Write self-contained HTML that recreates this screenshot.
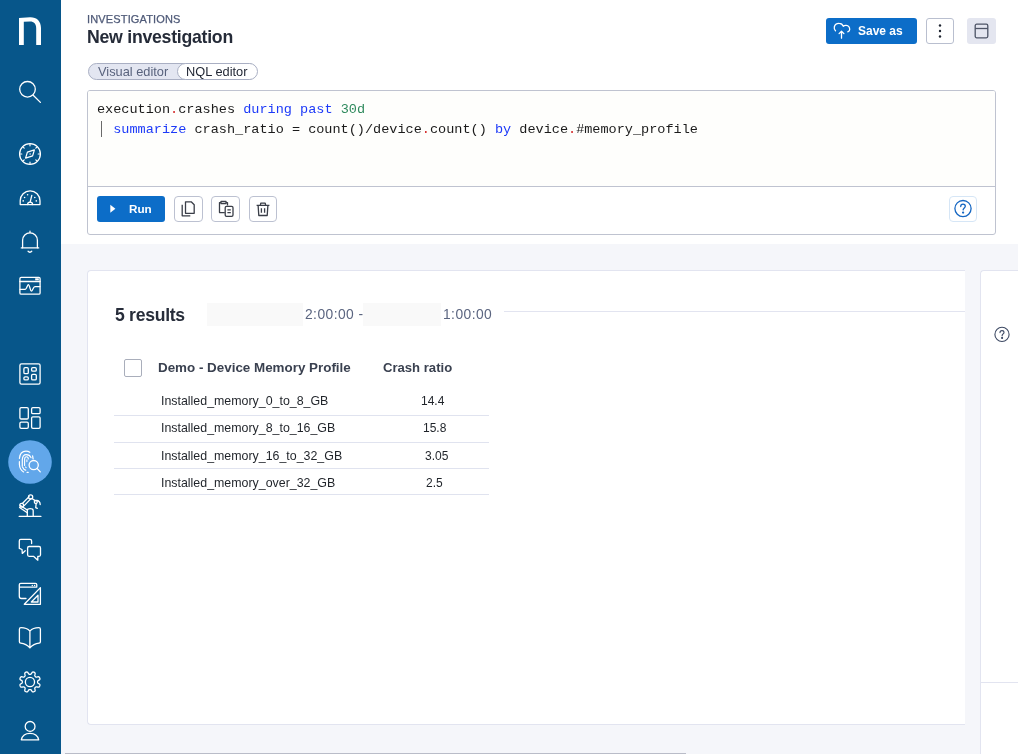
<!DOCTYPE html>
<html><head><meta charset="utf-8">
<style>
*{box-sizing:border-box;margin:0;padding:0}
html,body{width:1018px;height:754px;overflow:hidden;background:#fff;font-family:"Liberation Sans",sans-serif}
.abs{position:absolute;will-change:transform}
#side{position:absolute;left:0;top:0;width:61px;height:754px;background:#07568a}
#side svg{position:absolute;overflow:visible}
#hdr-sub{left:87px;top:13.7px;font-size:11px;line-height:11px;letter-spacing:0.15px;color:#4f5a78;-webkit-text-stroke:0.25px #4f5a78}
#hdr-title{left:87px;top:29px;font-size:17.7px;line-height:17.7px;letter-spacing:-0.26px;font-weight:bold;color:#252b38}
.btn{position:absolute;border-radius:3px}
#saveas{left:826px;top:18px;width:91px;height:26px;background:#0c6dc8;color:#fff;font-weight:bold;font-size:13px}
#kebab{left:926px;top:18px;width:28px;height:26px;border:1px solid #b9bfcf;background:#fff}
#layout{left:967px;top:18px;width:29px;height:26px;background:#e4e6f0}
#pill{left:88px;top:63px;width:169px;height:17px;border:1px solid #a9afc3;border-radius:9px;background:#e3e6f1}
#pill .on{position:absolute;left:88px;top:-1px;width:81px;height:17px;border:1px solid #a9afc3;border-radius:9px;background:#fff}
#editor{left:87px;top:90px;width:909px;height:145px;border:1px solid #bfc3d0;border-radius:3px;background:#fff}#codebg{left:88px;top:91px;width:907px;height:95px;background:#fefefc;border-radius:2px 2px 0 0}
#code{left:97px;top:99.6px;font-family:"Liberation Mono",monospace;font-size:13.54px;line-height:20px;color:#1b1b1b;white-space:pre}
.kw{color:#1d3af8}.num{color:#2f8a5d}.dot{color:#d42a2a}.bar{display:inline-block;width:8.12px;height:16px;vertical-align:-4px;position:relative}.bar:after{content:"";position:absolute;left:3.5px;top:0;width:1.5px;height:16px;background:#6a6a6a}
#divider{left:88px;top:186px;width:907px;height:1px;background:#bfc3d0}
#run{left:97px;top:196px;width:68px;height:26px;background:#0c6dc8}
.tb{position:absolute;top:196px;width:29px;height:26px;border:1px solid #bcc1d1;border-radius:4px;background:#fff}
#gray{left:61px;top:244px;width:957px;height:510px;background:#f5f6fa}
#card{left:87px;top:270px;width:878px;height:455px;background:#fff;border:1px solid #e2e4f0;border-right:none;border-radius:4px 0 0 4px}
#rpanel{left:980px;top:270px;width:38px;height:484px;background:#fff;border:1px solid #e2e4f0;border-right:none;border-bottom:none;border-radius:4px 0 0 0}
</style></head>
<body>
<div id="side">
<svg width="61" height="754" viewBox="0 0 61 754" style="left:0;top:0" fill="none" stroke="#fff" stroke-width="1.3" stroke-linecap="round" stroke-linejoin="round">
<path d="M19,18 L30,17.2 C36.5,17 41,21 41,28 L41,45 L36.2,45 L36.2,28.5 C36.2,24 34,21.6 30,21.6 L23.8,21.8 L23.8,45 L19,45 Z" fill="#fff" stroke="none"/>
<circle cx="27.5" cy="89.3" r="7.8"/>
<path d="M33.2,95.2 L40.4,102.4"/>
<circle cx="30" cy="154" r="10.4"/>
<path d="M30,144.2v1.6 M30,162.2v1.6 M20.2,154h1.6 M38.2,154h1.6 M23.1,147.1l1.1,1.1 M35.8,159.8l1.1,1.1 M36.9,147.1l-1.1,1.1 M24.2,159.8l-1.1,1.1" stroke-width="1.2"/>
<path d="M25.6,158.1 L27.4,152.1 L34.4,149.9 L32.6,155.9 Z" stroke-width="1.25"/>
<circle cx="30.1" cy="154" r="0.7" fill="#fff" stroke="none"/>
<path d="M20.2,204.6 L20.2,200.8 A9.9,9.9 0 0 1 40,200.8 L40,204.6 Z"/>
<path d="M27.6,204.6 A2.5,2.5 0 0 1 32.6,204.6"/>
<path d="M30.2,201.8 L31.8,195.4"/>
<g fill="#fff" stroke="none"><circle cx="27.6" cy="194.7" r="0.8"/><circle cx="24.6" cy="197.5" r="0.8"/><circle cx="23.2" cy="200.9" r="0.8"/><circle cx="34.8" cy="197.5" r="0.8"/><circle cx="36.3" cy="200.9" r="0.8"/></g>
<path d="M22.6,247.8 L22.6,240.2 A7.4,7.4 0 0 1 37.4,240.2 L37.4,247.8"/>
<path d="M21.3,247.9 L38.7,247.9 M30,231.2 L30,232.6"/>
<path d="M28,251.2 C29,252.6 30.8,252.6 31.8,251.2"/>
<rect x="19.9" y="277.4" width="20.2" height="16.8" rx="1.3"/>
<path d="M19.9,281.5 L40.1,281.5"/>
<rect x="35.2" y="278.3" width="3.6" height="2" fill="#fff" stroke="none"/>
<path d="M20,289.3 L25.3,289.3 C26.8,289.2 27.4,284.6 28.4,284.6 C29.6,284.6 30.3,291.2 31.4,291.2 C32.5,291.2 33.3,286.6 34.9,286.6 L39.9,286.6"/>
<rect x="19.9" y="363.9" width="20.2" height="20.2" rx="1.6"/>
<rect x="23.9" y="367.7" width="4.4" height="5.9" rx="1.2"/>
<rect x="31.6" y="367.7" width="4.7" height="3.4" rx="1.2"/>
<rect x="23.9" y="376.9" width="4.4" height="3" rx="1.2"/>
<rect x="31.6" y="374.3" width="4.7" height="5.6" rx="1.2"/>
<rect x="19.9" y="407.7" width="8.4" height="11.3" rx="1.3"/>
<rect x="19.9" y="422.1" width="8.4" height="6.3" rx="1.3"/>
<rect x="31.6" y="407.7" width="8.5" height="6" rx="1.3"/>
<rect x="31.6" y="416.8" width="8.5" height="11.6" rx="1.3"/>
<circle cx="30" cy="462" r="21.8" fill="#62a7ea" stroke="none"/>
<path d="M19.4,458.4 C19.8,453.8 22.5,451.2 26,451.2 C27.5,451.2 28.8,451.6 29.8,452.3" stroke-width="1.2"/>
<path d="M19.4,461.5 L19.4,464.5 C19.6,468 21.2,470.5 23.6,471.9 M27.1,472.4 L28.2,472.4" stroke-width="1.2"/>
<path d="M22.3,466.2 L22.3,459.6 C22.5,456.3 24,454.6 26.2,454.6 C28.5,454.6 30.3,455.8 31,457.6 M32.6,455.8 L33.1,458.8" stroke-width="1.2"/>
<path d="M22.5,467 C23.4,469 24.4,470 25.7,470.2" stroke-width="1.2"/>
<path d="M24.6,465.4 L24.6,459.6 C24.6,457.8 25.4,456.8 26.5,456.8 C27.6,456.8 28.3,457.7 28.3,459 M26.9,459.9 L26.9,461.6 M25.6,467 L26.1,467.6" stroke-width="1.1"/>
<circle cx="33.7" cy="465.1" r="4.6"/>
<path d="M37,468.4 L40.3,471.9"/>
<path d="M19.2,516.4 L40.9,516.4"/>
<path d="M27.3,516 L27.3,510.5 C27.3,509.3 28.3,508.7 30.2,508.7 C32.1,508.7 33.2,509.3 33.2,510.5 L33.2,516"/>
<path d="M27.3,510 L20.5,505.6 M27.3,512.8 L19.6,507.5"/>
<circle cx="21.7" cy="505.2" r="1.9"/>
<path d="M22.6,503.2 L29.1,496.6 M24.2,505.6 L31,498.6"/>
<circle cx="30.6" cy="496.9" r="2.1"/>
<path d="M32.3,498.8 L35.2,500.6"/>
<circle cx="35.8" cy="502" r="1.5"/>
<path d="M36.5,500.5 C38.5,500.3 40.2,502 40.2,504.5 M36.2,503.5 L35.7,507.6 L37.3,508.4"/>
<path d="M31.6,543.6 L31.6,540.9 C31.6,539.9 31,539.3 30,539.3 L20.7,539.3 C19.7,539.3 19.3,539.9 19.3,540.9 L19.3,548.4 L22,549.5 L22.3,553.4 L25.2,550.8"/>
<path d="M29.1,546.5 L39.1,546.5 C40,546.5 40.5,547 40.5,548 L40.5,554.8 C40.5,555.8 40,556.3 39.1,556.3 L37.8,556.3 L37.8,560.2 L33.5,556.3 L29.1,556.3 C28.2,556.3 27.6,555.8 27.6,554.8 L27.6,548 C27.6,547 28.2,546.5 29.1,546.5 Z"/>
<path d="M36.8,586.6 L36.8,584.8 C36.8,583.9 36.3,583.3 35.4,583.3 L20.8,583.3 C19.9,583.3 19.3,583.9 19.3,584.8 L19.3,596.3 C19.3,597.6 20.2,598.5 21.5,598.5 L26,598.5 M19.3,587.1 L36.8,587.1"/>
<g fill="#fff" stroke="none"><circle cx="32.3" cy="585.5" r="0.7"/><circle cx="34.6" cy="585.5" r="0.7"/></g>
<path d="M40.4,587.6 L40.4,604.3 L24.3,604.3 Z"/>
<path d="M38,595.2 L38,602 L31.3,602 Z"/>
<path d="M29.9,631.2 L29.9,647.9 M29.9,631.2 C28,629 25,627.7 21,627.7 C20,627.7 19.4,628.3 19.4,629.3 L19.4,641.8 C19.4,642.6 19.9,643.1 20.7,643.2 C24.5,643.7 27.7,645.5 29.9,647.9 C32.1,645.5 35.3,643.7 39.1,643.2 C39.9,643.1 40.4,642.6 40.4,641.8 L40.4,629.3 C40.4,628.3 39.8,627.7 38.8,627.7 C34.8,627.7 31.8,629 29.9,631.2"/>
<path d="M37.60,681.95 L37.60,682.25 L37.62,682.55 L37.72,682.87 L38.07,683.24 L38.88,683.73 L39.65,684.28 L39.94,684.77 L39.94,685.20 L39.84,685.60 L39.70,685.99 L39.52,686.36 L39.31,686.72 L39.00,687.02 L38.46,687.16 L37.52,687.01 L36.60,686.78 L36.09,686.79 L35.80,686.95 L35.57,687.15 L35.36,687.36 L35.15,687.57 L34.95,687.80 L34.79,688.09 L34.78,688.60 L35.01,689.52 L35.16,690.46 L35.02,691.00 L34.72,691.31 L34.36,691.52 L33.99,691.70 L33.60,691.84 L33.20,691.94 L32.77,691.94 L32.28,691.65 L31.73,690.88 L31.24,690.07 L30.87,689.72 L30.55,689.62 L30.25,689.60 L29.95,689.60 L29.65,689.60 L29.35,689.62 L29.03,689.72 L28.66,690.07 L28.17,690.88 L27.62,691.65 L27.13,691.94 L26.70,691.94 L26.30,691.84 L25.91,691.70 L25.54,691.52 L25.18,691.31 L24.88,691.00 L24.74,690.46 L24.89,689.52 L25.12,688.60 L25.11,688.09 L24.95,687.80 L24.75,687.57 L24.54,687.36 L24.33,687.15 L24.10,686.95 L23.81,686.79 L23.30,686.78 L22.38,687.01 L21.44,687.16 L20.90,687.02 L20.59,686.72 L20.38,686.36 L20.20,685.99 L20.06,685.60 L19.96,685.20 L19.96,684.77 L20.25,684.28 L21.02,683.73 L21.83,683.24 L22.18,682.87 L22.28,682.55 L22.30,682.25 L22.30,681.95 L22.30,681.65 L22.28,681.35 L22.18,681.03 L21.83,680.66 L21.02,680.17 L20.25,679.62 L19.96,679.13 L19.96,678.70 L20.06,678.30 L20.20,677.91 L20.38,677.54 L20.59,677.18 L20.90,676.88 L21.44,676.74 L22.38,676.89 L23.30,677.12 L23.81,677.11 L24.10,676.95 L24.33,676.75 L24.54,676.54 L24.75,676.33 L24.95,676.10 L25.11,675.81 L25.12,675.30 L24.89,674.38 L24.74,673.44 L24.88,672.90 L25.18,672.59 L25.54,672.38 L25.91,672.20 L26.30,672.06 L26.70,671.96 L27.13,671.96 L27.62,672.25 L28.17,673.02 L28.66,673.83 L29.03,674.18 L29.35,674.28 L29.65,674.30 L29.95,674.30 L30.25,674.30 L30.55,674.28 L30.87,674.18 L31.24,673.83 L31.73,673.02 L32.28,672.25 L32.77,671.96 L33.20,671.96 L33.60,672.06 L33.99,672.20 L34.36,672.38 L34.72,672.59 L35.02,672.90 L35.16,673.44 L35.01,674.38 L34.78,675.30 L34.79,675.81 L34.95,676.10 L35.15,676.33 L35.36,676.54 L35.57,676.75 L35.80,676.95 L36.09,677.11 L36.60,677.12 L37.52,676.89 L38.46,676.74 L39.00,676.88 L39.31,677.18 L39.52,677.54 L39.70,677.91 L39.84,678.30 L39.94,678.70 L39.94,679.13 L39.65,679.62 L38.88,680.17 L38.07,680.66 L37.72,681.03 L37.62,681.35 L37.60,681.65 Z"/>
<circle cx="29.95" cy="681.95" r="4.6"/>
<circle cx="30.1" cy="726.4" r="4.9"/>
<path d="M21.3,739.8 C22.2,736 25.6,733.4 30,733.4 C34.4,733.4 37.8,736 38.7,739.8 Z"/>
</svg>
</div>

<div id="hdr-sub" class="abs">INVESTIGATIONS</div>
<div id="hdr-title" class="abs">New investigation</div>

<div id="saveas" class="btn"><svg class="abs" style="left:0;top:0" width="91" height="26" fill="none" stroke="#fff" stroke-width="1.3" stroke-linecap="round" stroke-linejoin="round"><path d="M9.5,12.8 C8.3,11.5 8,10.3 8.3,9 C8.8,6.7 10.8,5.2 13.3,5.3 C15,5.3 16.5,6.2 17.3,8.3 C18,7.5 19,7.3 20.2,7.4 C22.3,7.7 23.7,9.4 23.7,11.5 C23.7,12.4 23.1,13.3 21.8,13.8"/><path d="M15.5,20.2 L15.5,13.3 M13.1,15.6 L15.5,13.2 L17.9,15.6"/></svg><span class="abs" style="left:32px;top:7px;font-size:12px;line-height:12px">Save as</span></div>
<div id="kebab" class="btn"><svg class="abs" style="left:0;top:0" width="26" height="24" fill="#1e2431"><circle cx="13" cy="6.5" r="1.2"/><circle cx="13" cy="12" r="1.2"/><circle cx="13" cy="17.5" r="1.2"/></svg></div>
<div id="layout" class="btn"><svg class="abs" style="left:0;top:0" width="29" height="26" fill="none" stroke="#4d5466" stroke-width="1.3"><rect x="8.2" y="6.2" width="12.6" height="13.6" rx="1.5"/><path d="M8.2,10.5 L20.8,10.5"/></svg></div>

<div id="pill" class="abs"><span class="abs" style="left:9px;top:2.2px;font-size:12.8px;line-height:12.8px;color:#59637d">Visual editor</span><div class="on"><span class="abs" style="left:8.2px;top:2.2px;font-size:12.8px;line-height:12.8px;color:#1e2431">NQL editor</span></div></div>

<div id="editor" class="abs"></div><div id="codebg" class="abs"></div>
<div id="divider" class="abs"></div>
<div id="code" class="abs">execution<span class="dot">.</span>crashes <span class="kw">during</span> <span class="kw">past</span> <span class="num">30d</span>
<span class="bar"></span> <span class="kw">summarize</span> crash_ratio = count()/device<span class="dot">.</span>count() <span class="kw">by</span> device<span class="dot">.</span>#memory_profile</div>
<div id="run" class="btn"><svg class="abs" style="left:0;top:0" width="68" height="26" fill="#fff"><path d="M13.3,8.8 L18.4,12.8 L13.3,16.8 Z"/></svg><span class="abs" style="left:31.6px;top:7.2px;font-size:11.7px;line-height:11.7px;font-weight:bold;color:#fff">Run</span></div>
<div class="tb" style="left:174px"><svg class="abs" style="left:-1px;top:-1px" width="29" height="26" fill="none" stroke="#3a3e48" stroke-width="1.3" stroke-linejoin="round"><path d="M11.5,5.8 L17.2,5.8 L20.2,8.8 L20.2,17.3 L11.5,17.3 Z"/><path d="M8.2,8.8 L8.2,19.8 L16.3,19.8"/></svg></div>
<div class="tb" style="left:211px"><svg class="abs" style="left:-1px;top:-1px" width="29" height="26" fill="none" stroke="#3a3e48" stroke-width="1.3" stroke-linejoin="round"><path d="M13.8,16.6 L8.5,16.6 L8.5,6.6 L10,6.6 M15,6.6 L16.5,6.6 L16.5,9.5"/><path d="M10,5.3 L15,5.3 L15,7.5 L10,7.5 Z"/><rect x="14.2" y="10.4" width="7.8" height="10" rx="1.3"/><path d="M16.4,13.8 L19.8,13.8 M16.4,16.6 L19.8,16.6"/></svg></div>
<div class="tb" style="left:249px;width:28px"><svg class="abs" style="left:-1px;top:-1px" width="28" height="26" fill="none" stroke="#3a3e48" stroke-width="1.3" stroke-linejoin="round"><path d="M7.6,9.3 L20.4,9.3 M11.3,9.3 L11.8,7.2 L16.2,7.2 L16.7,9.3"/><path d="M9.1,9.3 L9.8,19.5 L18.2,19.5 L18.9,9.3"/><path d="M12.4,12.3 L12.4,16.8 M15.6,12.3 L15.6,16.8"/></svg></div>

<div class="abs" style="left:949px;top:196px;width:28px;height:26px;border:1px solid #d6e6f6;border-radius:4px;background:#fff"><svg class="abs" style="left:-1px;top:-1px" width="28" height="26" fill="none" stroke="#1566c2" stroke-width="1.3" stroke-linecap="round"><circle cx="14" cy="12.6" r="8.1"/><path d="M11.7,10.5 C11.7,9 12.8,8.1 14,8.1 C15.3,8.1 16.3,9 16.3,10.3 C16.3,11.8 14.2,12.2 14.1,13.9"/><circle cx="14.1" cy="16.6" r="0.5" fill="#1566c2"/></svg></div>
<div id="gray" class="abs"></div>
<div id="card" class="abs"></div>
<div class="abs" style="left:115px;top:306.5px;font-size:17.6px;line-height:17.6px;letter-spacing:-0.28px;font-weight:bold;color:#272d3a">5 results</div>
<div class="abs" style="left:207px;top:303px;width:96px;height:23px;background:#f9f9f9"></div>
<div class="abs" style="left:305.2px;top:308.2px;font-size:13.8px;line-height:13.8px;letter-spacing:0.45px;color:#5b6580;white-space:pre">2:00:00 -</div>
<div class="abs" style="left:363px;top:303px;width:78px;height:23px;background:#f9f9f9"></div>
<div class="abs" style="left:443px;top:308.2px;font-size:13.8px;line-height:13.8px;letter-spacing:0.45px;color:#5b6580">1:00:00</div>
<div class="abs" style="left:504px;top:311px;width:461px;height:1px;background:#e2e4f0"></div>
<div class="abs" style="left:124px;top:359px;width:18px;height:18px;border:1px solid #a9aebb;border-radius:2px;background:#fff"></div>
<div class="abs" style="left:157.6px;top:360.7px;font-size:13.4px;line-height:13.4px;font-weight:bold;color:#3a4150;white-space:pre">Demo - Device Memory Profile</div>
<div class="abs" style="left:383px;top:360.7px;font-size:13.1px;line-height:13.1px;font-weight:bold;color:#3a4150">Crash ratio</div>
<div class="abs" style="left:160.9px;top:395px;font-size:12.4px;line-height:12.4px;color:#1f2329">Installed_memory_0_to_8_GB</div>
<div class="abs" style="left:421.3px;top:394.8px;font-size:12px;line-height:12px;color:#1f2329">14.4</div>
<div class="abs" style="left:114px;top:415px;width:375px;height:1px;background:#e0e3ef"></div>
<div class="abs" style="left:160.9px;top:422.2px;font-size:12.4px;line-height:12.4px;color:#1f2329">Installed_memory_8_to_16_GB</div>
<div class="abs" style="left:422.7px;top:422.0px;font-size:12px;line-height:12px;color:#1f2329">15.8</div>
<div class="abs" style="left:114px;top:442px;width:375px;height:1px;background:#e0e3ef"></div>
<div class="abs" style="left:161.4px;top:449.7px;font-size:12.4px;line-height:12.4px;color:#1f2329">Installed_memory_16_to_32_GB</div>
<div class="abs" style="left:424.9px;top:449.5px;font-size:12px;line-height:12px;color:#1f2329">3.05</div>
<div class="abs" style="left:114px;top:468px;width:375px;height:1px;background:#e0e3ef"></div>
<div class="abs" style="left:160.9px;top:476.8px;font-size:12.4px;line-height:12.4px;color:#1f2329">Installed_memory_over_32_GB</div>
<div class="abs" style="left:426px;top:476.6px;font-size:12px;line-height:12px;color:#1f2329">2.5</div>
<div class="abs" style="left:114px;top:494px;width:375px;height:1px;background:#e0e3ef"></div>
<div id="rpanel" class="abs"></div>
<div class="abs" style="left:981px;top:682px;width:37px;height:1px;background:#e2e4f0"></div>
<svg class="abs" style="left:990px;top:322px" width="24" height="24" fill="none" stroke="#3e4a64" stroke-width="1.1" stroke-linecap="round"><circle cx="12" cy="12.4" r="7.1"/><path d="M10,10.6 C10,9.3 10.9,8.6 12,8.6 C13.1,8.6 14,9.4 14,10.5 C14,11.8 12.2,12.1 12.1,13.6"/><circle cx="12.1" cy="15.9" r="0.5" fill="#3e4a64"/></svg>
<div class="abs" style="left:65px;top:753px;width:621px;height:1px;background:#b9bcc8"></div>
</body></html>
